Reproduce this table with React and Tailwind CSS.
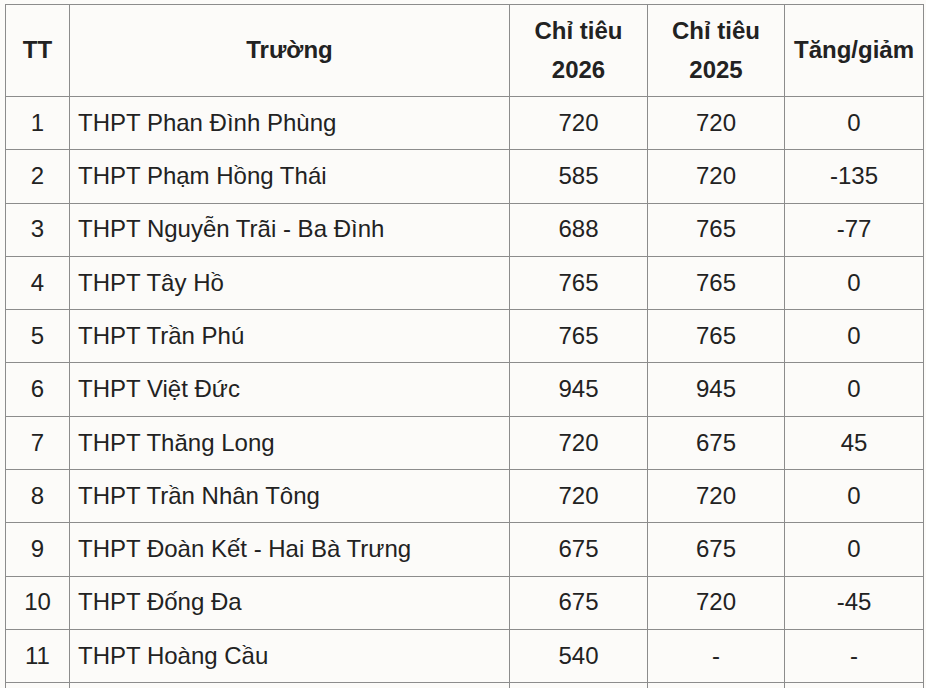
import React from 'react';

const rows = [
  ['1', 'THPT Phan Đình Phùng', '720', '720', '0'],
  ['2', 'THPT Phạm Hồng Thái', '585', '720', '-135'],
  ['3', 'THPT Nguyễn Trãi - Ba Đình', '688', '765', '-77'],
  ['4', 'THPT Tây Hồ', '765', '765', '0'],
  ['5', 'THPT Trần Phú', '765', '765', '0'],
  ['6', 'THPT Việt Đức', '945', '945', '0'],
  ['7', 'THPT Thăng Long', '720', '675', '45'],
  ['8', 'THPT Trần Nhân Tông', '720', '720', '0'],
  ['9', 'THPT Đoàn Kết - Hai Bà Trưng', '675', '675', '0'],
  ['10', 'THPT Đống Đa', '675', '720', '-45'],
  ['11', 'THPT Hoàng Cầu', '540', '-', '-'],
  ['\u00a0', '\u00a0', '\u00a0', '\u00a0', '\u00a0'],
];

const cell = 'border border-[#8c8c8c] px-2 py-[6.8px] leading-[38.7px]';

function App() {
  return (
    <div className="min-h-screen bg-[#fcfbf9] pt-[4px] pl-[5px] overflow-hidden" style={{ fontFamily: '"Liberation Sans", Arial, sans-serif' }}>
      <table className="table-fixed border-collapse w-[918px] text-[24px] text-[#222]">
        <colgroup>
          <col className="w-[64px]" />
          <col className="w-[440px]" />
          <col className="w-[138px]" />
          <col className="w-[137px]" />
          <col className="w-[139px]" />
        </colgroup>
        <thead>
          <tr>
            <th className={`${cell} font-bold text-center`}>TT</th>
            <th className={`${cell} font-bold text-center`}>Trường</th>
            <th className={`${cell} font-bold text-center`}>Chỉ tiêu<br />2026</th>
            <th className={`${cell} font-bold text-center`}>Chỉ tiêu<br />2025</th>
            <th className={`${cell} font-bold text-center px-1`}>Tăng/giảm</th>
          </tr>
        </thead>
        <tbody>
          {rows.map((r, i) => (
            <tr key={i}>
              <td className={`${cell} text-center`}>{r[0]}</td>
              <td className={`${cell} text-left`}>{r[1]}</td>
              <td className={`${cell} text-center`}>{r[2]}</td>
              <td className={`${cell} text-center`}>{r[3]}</td>
              <td className={`${cell} text-center`}>{r[4]}</td>
            </tr>
          ))}
        </tbody>
      </table>
    </div>
  );
}

export default App;
